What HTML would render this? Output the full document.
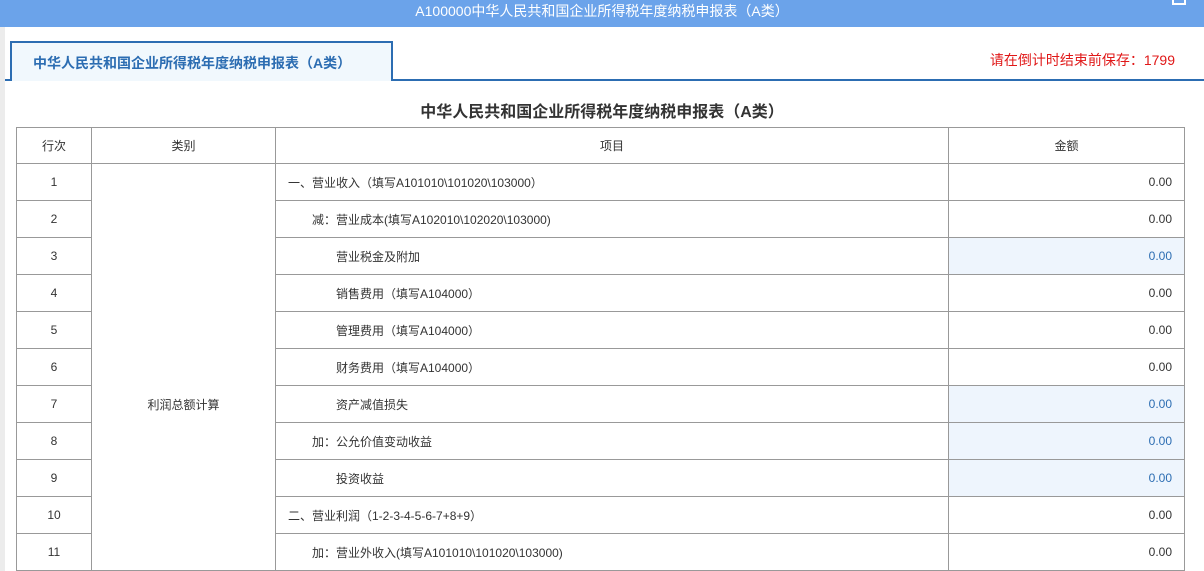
<!DOCTYPE html>
<html><head><meta charset="utf-8"><style>
*{margin:0;padding:0;box-sizing:border-box}
body{width:1204px;height:571px;overflow:hidden;background:#fff;font-family:"Liberation Sans","Noto Sans CJK SC",sans-serif;position:relative;color:#333}
.top{position:absolute;left:0;top:0;width:1204px;height:27px;background:#6ba3ea;color:#fff;font-size:14px;text-align:center;line-height:22px}
.ico{position:absolute;left:1172px;top:-4px;width:14px;height:9px;border:2px solid #fff}
.strip{position:absolute;left:0;top:27px;width:5px;height:544px;background:#ececec}
.line{position:absolute;left:5px;top:79px;width:1199px;height:2px;background:#2c6db2}
.tab{position:absolute;left:10px;top:41px;width:383px;height:40px;border:2px solid #2c6db2;border-bottom:none;background:#f1f8fd;color:#2c6db2;font-weight:bold;font-size:14px;line-height:40px;padding-left:21px}
.timer{position:absolute;right:29px;top:50px;color:#e01818;font-size:14px}
.title{position:absolute;left:0;width:1204px;top:98px;text-align:center;font-size:16px;font-weight:bold;color:#333}
table{position:absolute;left:16px;top:127px;border-collapse:collapse;font-size:12px}
td{border:1px solid #999;height:37px;padding:0}
.c{text-align:center}
.r{text-align:right;padding-right:12px}
.b{background:#eef5fd;color:#2c6db2}
</style></head><body>
<div class="top">A100000中华人民共和国企业所得税年度纳税申报表（A类）</div>
<div class="ico"></div>
<div class="strip"></div>
<div class="line"></div>
<div class="tab">中华人民共和国企业所得税年度纳税申报表（A类）</div>
<div class="timer">请在倒计时结束前保存：1799</div>
<div class="title">中华人民共和国企业所得税年度纳税申报表（A类）</div>
<table>
<tr><td class="c" style="width:75px;height:36px">行次</td><td class="c" style="width:184px;height:36px">类别</td><td class="c" style="width:673px;height:36px">项目</td><td class="c" style="width:236px;height:36px">金额</td></tr>
<tr><td class="c">1</td><td class="c" rowspan="11" style="vertical-align:top;padding-top:232px">利润总额计算</td><td style="padding-left:12px">一、营业收入（填写A101010\101020\103000）</td><td class="r">0.00</td></tr>
<tr><td class="c">2</td><td style="padding-left:36px">减：营业成本(填写A102010\102020\103000)</td><td class="r">0.00</td></tr>
<tr><td class="c">3</td><td style="padding-left:60px">营业税金及附加</td><td class="r b">0.00</td></tr>
<tr><td class="c">4</td><td style="padding-left:60px">销售费用（填写A104000）</td><td class="r">0.00</td></tr>
<tr><td class="c">5</td><td style="padding-left:60px">管理费用（填写A104000）</td><td class="r">0.00</td></tr>
<tr><td class="c">6</td><td style="padding-left:60px">财务费用（填写A104000）</td><td class="r">0.00</td></tr>
<tr><td class="c">7</td><td style="padding-left:60px">资产减值损失</td><td class="r b">0.00</td></tr>
<tr><td class="c">8</td><td style="padding-left:36px">加：公允价值变动收益</td><td class="r b">0.00</td></tr>
<tr><td class="c">9</td><td style="padding-left:60px">投资收益</td><td class="r b">0.00</td></tr>
<tr><td class="c">10</td><td style="padding-left:12px">二、营业利润（1-2-3-4-5-6-7+8+9）</td><td class="r">0.00</td></tr>
<tr><td class="c">11</td><td style="padding-left:36px">加：营业外收入(填写A101010\101020\103000)</td><td class="r">0.00</td></tr>
</table>
</body></html>
